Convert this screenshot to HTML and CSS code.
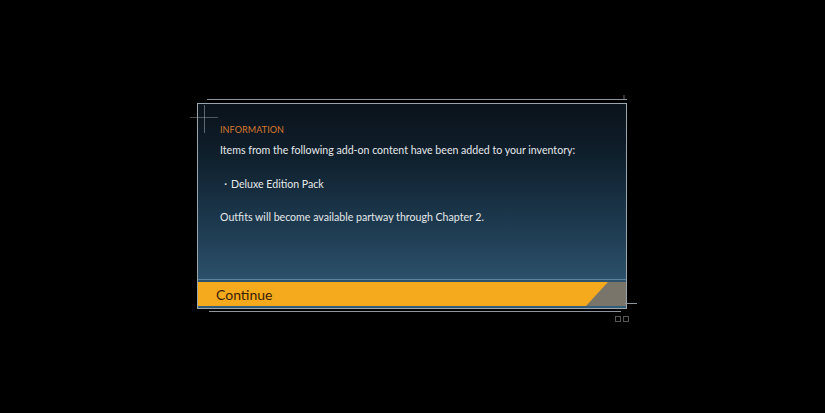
FILE: index.html
```html
<!DOCTYPE html>
<html>
<head>
<meta charset="utf-8">
<link rel="stylesheet" href="styles.css">
</head>
<body>
<div class="stage">
  <div class="frame">
    <span class="line-top"></span>
    <span class="mark-tr"></span>
    <span class="cross-v"></span>
    <span class="cross-h"></span>
    <div class="dialog">
      <div class="content">
        <div class="title">INFORMATION</div>
        <p class="text">Items from the following add-on content have been added to your inventory:</p>
        <p class="text item">・Deluxe Edition Pack</p>
        <p class="text">Outfits will become available partway through Chapter 2.</p>
      </div>
      <div class="sep"></div>
      <div class="bar">
        <div class="continue">Continue</div>
        <div class="bar-end"></div>
      </div>
    </div>
    <span class="line-bottom"></span>
    <span class="line-br"></span>
    <span class="squares"><i></i><i></i></span>
  </div>
</div>
</body>
</html>
```
FILE: styles.css
```css
html, body {
  margin: 0;
  padding: 0;
  background: #000;
}
.stage {
  width: 825px;
  height: 413px;
  padding-top: 103px;
  box-sizing: border-box;
}
.frame {
  position: relative;
  margin-left: 197px;
  width: 430px;
}
.dialog {
  width: 430px;
  height: 206px;
  box-sizing: border-box;
  border: 1px solid #9aa6ae;
  background: linear-gradient(180deg, #0a121a 0%, #0f1f2c 25%, #1d3a50 60%, #345d78 100%);
  display: flex;
  flex-direction: column;
  font-family: "Lato", "Open Sans", sans-serif;
}
.content {
  flex: 1;
  padding: 20px 0 0 22px;
}
.title {
  color: #d9792e;
  font-size: 9px;
  letter-spacing: 0.1px;
  line-height: 12px;
}
.text {
  margin: 7px 0 0 0;
  color: #e4e8ea;
  font-size: 10.6px;
  line-height: 14px;
}
.text.item {
  margin-top: 20px;
}
.text.item + .text {
  margin-top: 19px;
}
.sep {
  height: 1px;
  background: #5f859c;
  margin-bottom: 2px;
}
.bar {
  height: 24px;
  display: flex;
  margin-bottom: 2px;
  background: #7a756a;
}
.continue {
  flex: 1;
  background: #f5aa1d;
  clip-path: polygon(0 0, 100% 0, calc(100% - 22px) 100%, 0 100%);
  margin-right: -2px;
  padding-left: 18px;
  font-size: 14px;
  line-height: 25px;
  color: #3a1e04;
}
.bar-end {
  width: 20px;
}
.line-top {
  position: absolute;
  left: 10px;
  top: -4px;
  width: 420px;
  height: 1px;
  background: #8d969c;
}
.mark-tr {
  position: absolute;
  left: 426px;
  top: -8px;
  width: 2px;
  height: 4px;
  background: #333;
}
.cross-v {
  position: absolute;
  left: 7px;
  top: 2px;
  width: 1px;
  height: 28px;
  background: rgba(160,170,176,0.55);
}
.cross-h {
  position: absolute;
  left: -7px;
  top: 14px;
  width: 28px;
  height: 1px;
  background: rgba(160,170,176,0.45);
}
.line-bottom {
  position: absolute;
  left: 12px;
  top: 208px;
  width: 412px;
  height: 1px;
  background: #8d969c;
}
.line-br {
  position: absolute;
  left: 428px;
  top: 200px;
  width: 12px;
  height: 1px;
  background: #8d969c;
}
.squares {
  position: absolute;
  left: 418px;
  top: 213px;
  display: flex;
  gap: 2px;
}
.squares i {
  display: block;
  width: 4px;
  height: 4px;
  border: 1px solid #555;
}
```
